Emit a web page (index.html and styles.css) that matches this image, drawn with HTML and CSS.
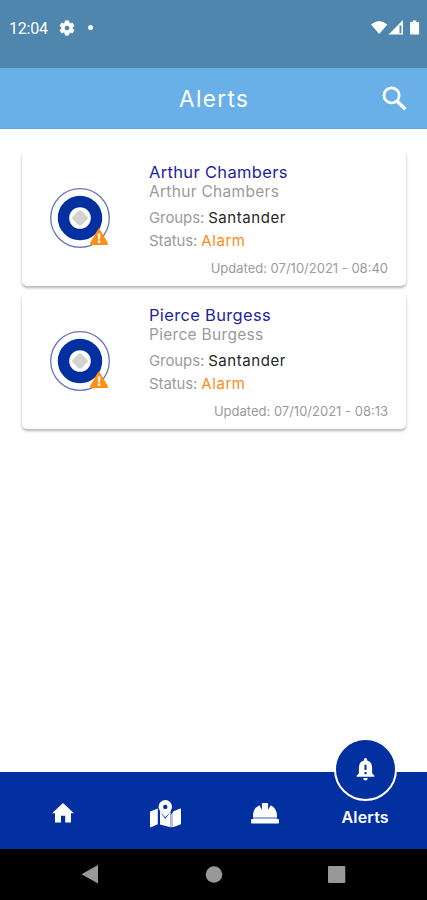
FILE: index.html
```html
<!DOCTYPE html>
<html lang="en">
<head>
    <meta charset="UTF-8">
    <meta name="viewport" content="width=device-width, initial-scale=1.0">
    <title>Alerts</title>
    <link rel="stylesheet" href="styles.css">
</head>
<body>
    <!-- Shared drawing of a beacon in alarm -->
    <svg class="symbols">
        <symbol id="beacon" viewBox="0 0 60 60">
            <circle cx="30" cy="30" r="29.3" fill="#fff" stroke="#6575b8" stroke-width="1.3"/>
            <circle cx="30" cy="30" r="16.5" fill="none" stroke="#0230a0" stroke-width="11.4"/>
            <path d="M28.5 22.8q1.5-1.3 3 0l5.7 5.7q1.3 1.5 0 3l-5.7 5.7q-1.5 1.3-3 0l-5.7-5.7q-1.3-1.5 0-3z" fill="#d3d3d3"/>
            <path d="M47.9 41.4q1-1.6 2 0L57.9 55q.8 1.9-1 1.900H41.100q-1.900 0-1-1.900z" fill="#ff9015"/>
            <path d="M47.800 45.500h2.600l-.4 5.900h-1.800z" fill="#fff"/>
            <circle cx="49.100" cy="53.700" r="1.400" fill="#fff"/>
        </symbol>
    </svg>
    <div class="status-bar">
        <span class="time">12:04</span>
        <svg class="gear" width="18" height="18" viewBox="0 0 24 24"><path fill="#fff" stroke="#fff" d="M19.14 12.94c.04-.3.06-.61.06-.94 0-.32-.02-.64-.07-.94l2.03-1.58c.18-.14.23-.41.12-.61l-1.92-3.32c-.12-.22-.37-.29-.59-.22l-2.39.96c-.5-.38-1.03-.7-1.62-.94l-.36-2.54c-.04-.24-.24-.41-.48-.41h-3.84c-.24 0-.43.17-.47.41l-.36 2.54c-.59.24-1.13.57-1.62.94l-2.39-.96c-.22-.08-.47 0-.59.22L2.74 8.87c-.12.21-.08.47.12.61l2.03 1.58c-.05.3-.09.63-.09.94s.02.64.07.94l-2.03 1.58c-.18.14-.23.41-.12.61l1.92 3.32c.12.22.37.29.59.22l2.39-.96c.5.38 1.03.7 1.62.94l.36 2.54c.05.24.24.41.48.41h3.84c.24 0 .44-.17.47-.41l.36-2.54c.59-.24 1.13-.56 1.62-.94l2.39.96c.22.08.47 0 .59-.22l1.92-3.32c.12-.22.07-.47-.12-.61l-2.01-1.58zM12 15.6c-1.98 0-3.6-1.62-3.6-3.6s1.62-3.6 3.6-3.6 3.6 1.62 3.6 3.6-1.62 3.6-3.6 3.6z"/></svg>
        <span class="dot"></span>
        <svg class="signals" width="49" height="16" viewBox="0 0 49 16" fill="#fff">
            <path d="M0 4.5Q8-2.7 16.4 4.5L8.2 14z"/>
            <path d="M32 0v14.5H17.6z"/>
            <path d="M28.500 5.500h1.900v7.800h-1.900z" fill="#4e86ad"/>
            <path d="M39.900 2H41.700V.4h3.600V2h1.900q.9 0 .9.900v10.700q0 .9-.9.900h-7.300q-.9 0-.9-.9V2.900q0-.9.900-.9z"/>
        </svg>
    </div>
    <header class="app-bar">
        <h1>Alerts</h1>
        <svg class="search" width="25" height="25" viewBox="0 0 25 25" fill="none" stroke="#fff">
            <circle cx="9.6" cy="9.4" r="7.6" stroke-width="2.7"/>
            <path d="M15 15l8.300 8.200" stroke-width="3.400"/>
        </svg>
    </header>
    <main class="alerts">
        <div class="card">
            <svg class="beacon"><use href="#beacon"/></svg>
            <div class="info">
                <h2>Arthur Chambers</h2>
                <p class="subtitle">Arthur Chambers</p>
                <p class="row groups"><span class="label">Groups:</span> <span class="value">Santander</span></p>
                <p class="row status"><span class="label">Status:</span> <span class="value alarm">Alarm</span></p>
                <p class="updated">Updated: 07/10/2021 - 08:40</p>
            </div>
        </div>
        <div class="card">
            <svg class="beacon"><use href="#beacon"/></svg>
            <div class="info">
                <h2>Pierce Burgess</h2>
                <p class="subtitle">Pierce Burgess</p>
                <p class="row groups"><span class="label">Groups:</span> <span class="value">Santander</span></p>
                <p class="row status"><span class="label">Status:</span> <span class="value alarm">Alarm</span></p>
                <p class="updated">Updated: 07/10/2021 - 08:13</p>
            </div>
        </div>
    </main>
    <nav class="tabs">
        <a class="tab">
            <svg width="22" height="20" viewBox="0 0 22 20" fill="#fff"><path d="M11 0l11 10.200h-3V19.500h-5.800v-6.800H9v6.800H3v-9.300H0z"/></svg>
        </a>
        <a class="tab map">
            <svg width="31" height="28" viewBox="0 0 31 28" fill="#fff">
                <path d="M0 11.500l7.800-3v15.800L1 27.200q-1 .3-1-.7zM10 10.500q1.500 4 5.300 8.200 3.800-4.200 5.200-8.200v16.800L10 24.400zM23 11.500l7-2.900q1-.4 1 .7v14.200q0 .7-.7.900L23 27.300z"/>
                <path d="M20.500 15v12.300l2.500-.3V12z" fill="#b9c5e5"/>
                <path fill-rule="evenodd" d="M15.300 0a6.700 6.700 0 0 1 6.700 6.700c0 3.300-3.400 7.300-6.700 10.600C12 14 8.600 10 8.600 6.700A6.700 6.700 0 0 1 15.300 0zm0 4.700a2.200 2.200 0 1 0 0 4.400 2.200 2.200 0 0 0 0-4.400z"/>
            </svg>
        </a>
        <a class="tab helmet">
            <svg width="28" height="21" viewBox="0 0 28 21" fill="#fff">
                <path d="M2 14.200v-1.700Q2 5.500 8.400 2.300L10.900 7V1q0-1 1-1h4.200q1 0 1 1v6l2.500-4.700Q26 5.500 26 12.500v1.700z"/>
                <path d="M2 14.200h24v1.700H2z" fill="#aebde2"/>
                <rect y="15.900" width="28" height="4.700" rx="1"/>
            </svg>
        </a>
        <a class="tab active">
            <span class="bubble">
                <svg width="19" height="24" viewBox="0 0 19 24">
                    <path fill="#fff" d="M9.500 0q1.600 0 1.600 1.700v.7q5 1.200 5 7.100v5.800l2.300 2.400v1H.6v-1l2.300-2.400V9.500q0-5.900 5-7.100v-.7Q7.900 0 9.500 0zM7.200 20h4.600q-.2 2.500-2.300 2.500T7.200 20z"/>
                    <path fill="#0230a0" d="M8.500 6.800h2v5.200h-2zM8.500 14h2v2.200h-2z"/>
                </svg>
            </span>
            <span class="tab-label">Alerts</span>
        </a>
    </nav>
    <div class="system-nav">
        <svg width="427" height="51" viewBox="0 0 427 51" fill="#989898">
            <path d="M98 16v18.500L81.500 25.200z"/>
            <circle cx="214" cy="25.500" r="8.300"/>
            <rect x="328" y="17" width="17.300" height="17" rx="1"/>
        </svg>
    </div>
</body>
</html>
```

FILE: styles.css
```css
* {
    box-sizing: border-box;
}
body {
    margin: 0;
    height: 900px;
    display: flex;
    flex-direction: column;
    background-color: #fff;
    font-family: Inter, Roboto, Arial, sans-serif;
    overflow: hidden;
}
h1, h2, p {
    margin: 0;
    font-weight: 400;
    white-space: nowrap;
}
svg {
    display: block;
    flex-shrink: 0;
}
.symbols {
    position: absolute;
    width: 0;
    height: 0;
}
.status-bar {
    display: flex;
    align-items: center;
    height: 68px;
    padding: 0 7px 13px 9px;
    background-color: #4e86ad;
    color: #fff;
}
.time {
    width: 49px;
    padding-top: 1px;
    font-family: Roboto, sans-serif;
    font-size: 16px;
    letter-spacing: -0.2px;
}
.dot {
    width: 5px;
    height: 5px;
    margin-left: 12px;
    border-radius: 50%;
    background-color: #fff;
}
.signals {
    margin-left: auto;
}
.app-bar {
    display: flex;
    align-items: center;
    height: 61px;
    padding: 1px 20px 0 179px;
    background-color: #68b0e7;
    border-bottom: 1px solid #5faae3;
    color: #fff;
}
.app-bar h1 {
    font-size: 22.5px;
    line-height: 28px;
    letter-spacing: 1.4px;
}
.search {
    margin-left: auto;
}
.alerts {
    flex: 1;
    display: flex;
    flex-direction: column;
    gap: 7px;
    padding: 21px 21px 0 22px;
}
.card {
    display: flex;
    height: 136px;
    padding: 0 18px 0 28px;
    border-radius: 5px;
    background-color: #fff;
    box-shadow: 0 2px 3px rgba(0, 0, 0, 0.3);
}
.beacon {
    width: 60px;
    height: 60px;
    margin-top: 38px;
}
.info {
    flex: 1;
    padding: 12px 0 0 39px;
    color: #9b9b9b;
}
.info h2 {
    font-size: 16.5px;
    line-height: 20px;
    letter-spacing: 0.33px;
    color: #1d259b;
}
.subtitle {
    font-size: 15.5px;
    line-height: 19px;
    letter-spacing: 0.3px;
}
.row {
    display: flex;
    gap: 4px;
    font-size: 15px;
    line-height: 23px;
}
.groups {
    margin-top: 5px;
}
.label {
    letter-spacing: -0.1px;
}
.value {
    letter-spacing: 0.55px;
    color: #262626;
}
.alarm {
    color: #ff8b17;
}
.updated {
    margin-top: 7px;
    font-size: 13px;
    line-height: 18px;
    text-align: right;
}
.tabs {
    display: flex;
    height: 77px;
    padding: 4px 12px 0 13px;
    background-color: #0230a0;
    color: #fff;
}
.tab {
    position: relative;
    flex: 1;
    display: flex;
    align-items: center;
    justify-content: center;
}
.map {
    padding: 2px 0 0 3px;
}
.helmet {
    padding-top: 2px;
}
.active {
    align-items: flex-start;
    padding-top: 30px;
}
/* Raised circle of the selected tab */
.bubble {
    position: absolute;
    top: -38px;
    left: 50%;
    width: 63px;
    height: 63px;
    margin-left: -31.5px;
    display: flex;
    align-items: center;
    justify-content: center;
    border: 2.5px solid #fff;
    border-radius: 50%;
    background-color: #0230a0;
}
.tab-label {
    font-size: 16px;
    line-height: 22px;
    font-weight: 600;
    letter-spacing: 0.2px;
}
.system-nav {
    height: 51px;
    background-color: #000;
}
```
